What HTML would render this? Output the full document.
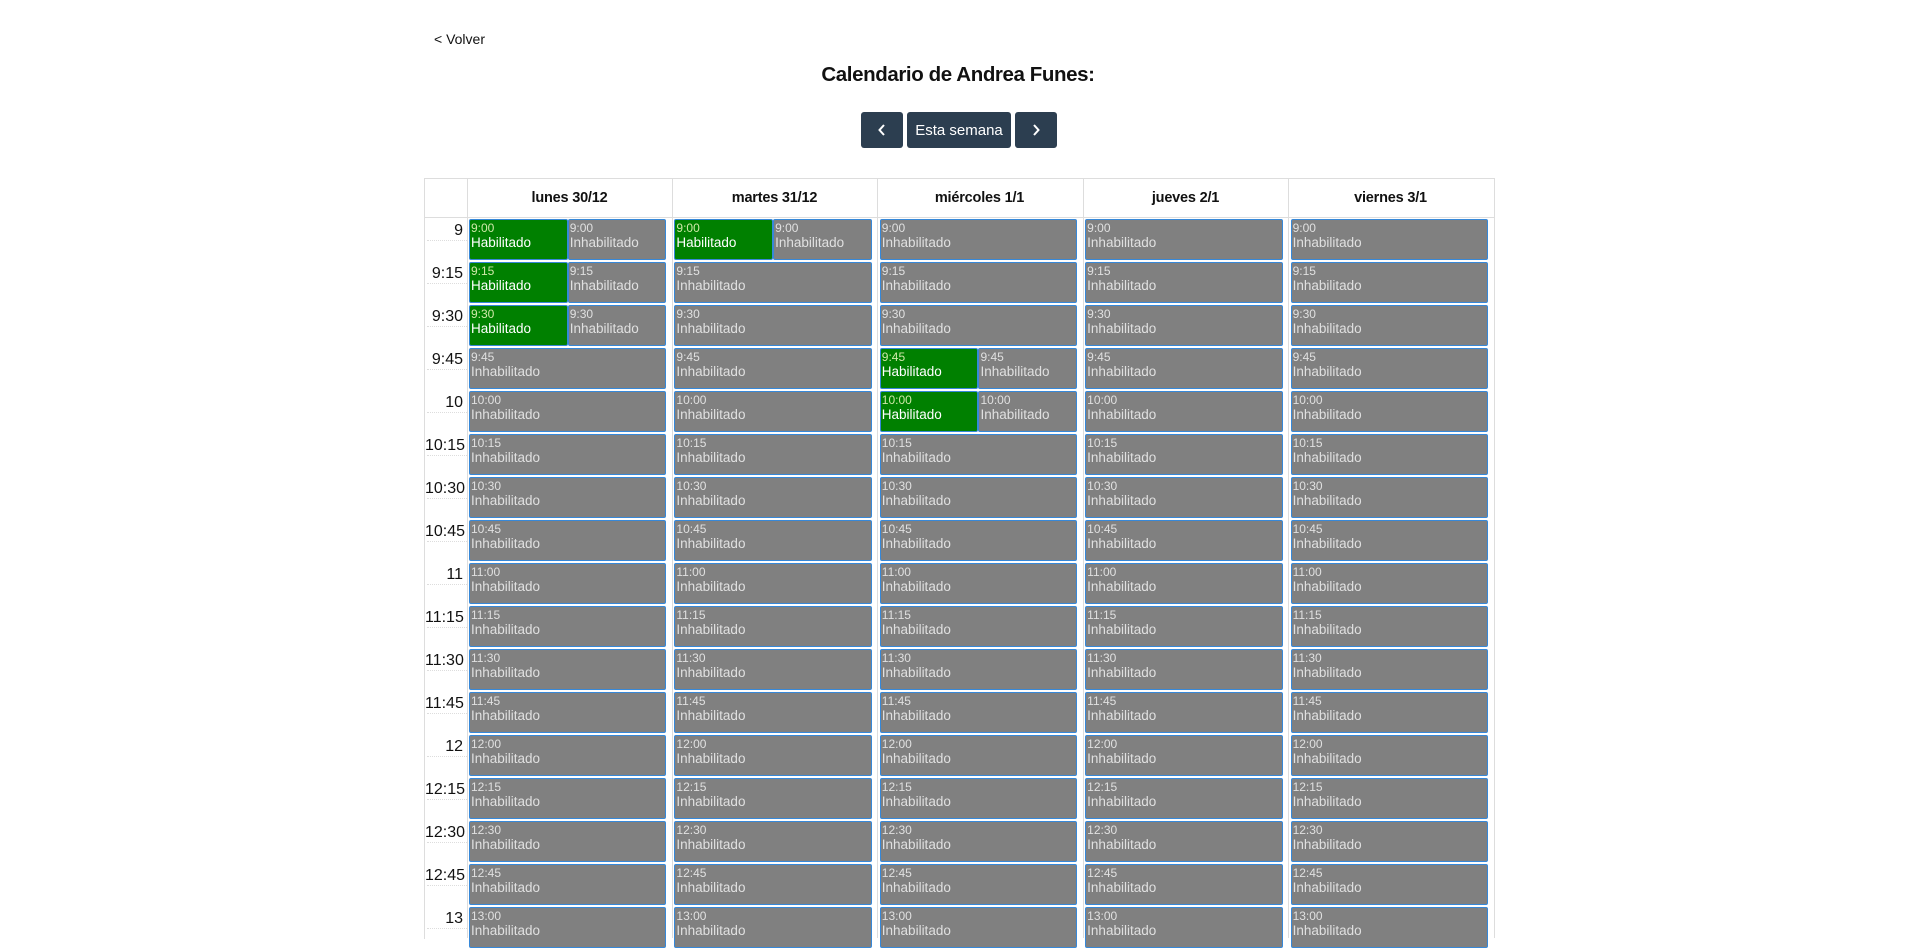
<!DOCTYPE html>
<html><head><meta charset="utf-8"><style>
html,body{margin:0;padding:0;background:#fff;width:1916px;height:928px;overflow:hidden;font-family:"Liberation Sans",Arial,sans-serif;}
.abs{position:absolute;}
#volver{left:434px;top:31px;font-size:14px;color:#111;}
#title{left:0;width:1916px;top:63px;text-align:center;font-size:20.5px;font-weight:bold;color:#111;letter-spacing:-0.4px;}
.btn{top:112px;height:36px;background:#2c3e50;border-radius:3px;color:#fff;display:flex;align-items:center;justify-content:center;font-size:15px;}
#tbl{left:424px;top:178px;width:1070px;height:760px;border-left:1px solid #ddd;border-top:1px solid #ddd;}
.vl{position:absolute;top:178px;width:1px;height:760px;background:#ddd;}
.hd{position:absolute;top:179px;height:39px;width:205px;text-align:center;line-height:39px;font-weight:bold;font-size:14.5px;color:#111;letter-spacing:-0.2px;}
.hl{position:absolute;left:424px;width:1070px;height:1px;background:#ddd;}
.r{position:absolute;left:425px;height:43px;width:1070px;display:flex;}
.t{width:38px;text-align:right;padding-right:4px;font-size:16px;color:#111;padding-top:4px;position:relative;box-sizing:content-box;}
.t:after{content:"";position:absolute;left:2px;right:0;top:22px;border-top:1px dotted #ddd;}
.c{width:205.4px;height:43px;box-sizing:border-box;padding:1px 6px 1px 2px;display:flex;}
.e{flex:1;background:#808080;border:1px solid #3788d8;border-radius:2px;color:#e0e0e0;padding-left:1px;overflow:hidden;white-space:nowrap;height:39px;}
.e.g{background:#008000;color:#fff;}
.e.g .tm{color:#cfe8a8;}
.tm{font-size:12px;line-height:14px;margin-top:1px;}
.lb{font-size:13.5px;line-height:16px;}
</style></head><body>
<div id="volver" class="abs">&lt; Volver</div>
<div id="title" class="abs">Calendario de Andrea Funes:</div>
<div class="abs btn" style="left:861px;width:42px;"><svg width="12" height="16" viewBox="0 0 12 16"><path d="M8 3 L3.5 8 L8 13" stroke="#fff" stroke-width="2" fill="none"/></svg></div>
<div class="abs btn" style="left:907px;width:104px;">Esta semana</div>
<div class="abs btn" style="left:1015px;width:42px;"><svg width="12" height="16" viewBox="0 0 12 16"><path d="M4 3 L8.5 8 L4 13" stroke="#fff" stroke-width="2" fill="none"/></svg></div>
<div id="tbl" class="abs"></div>
<div class="vl" style="left:467px"></div>
<div class="vl" style="left:672px"></div>
<div class="vl" style="left:877px"></div>
<div class="vl" style="left:1083px"></div>
<div class="vl" style="left:1288px"></div>
<div class="vl" style="left:1494px"></div>
<div class="hd" style="left:467px">lunes 30/12</div>
<div class="hd" style="left:672px">martes 31/12</div>
<div class="hd" style="left:877px">miércoles 1/1</div>
<div class="hd" style="left:1083px">jueves 2/1</div>
<div class="hd" style="left:1288px">viernes 3/1</div>
<div class="hl" style="top:217px"></div>

<div class="r" style="top:218px"><div class="t">9</div>
<div class="c"><div class="e g"><div class="tm">9:00</div><div class="lb">Habilitado</div></div><div class="e"><div class="tm">9:00</div><div class="lb">Inhabilitado</div></div></div>
<div class="c"><div class="e g"><div class="tm">9:00</div><div class="lb">Habilitado</div></div><div class="e"><div class="tm">9:00</div><div class="lb">Inhabilitado</div></div></div>
<div class="c"><div class="e"><div class="tm">9:00</div><div class="lb">Inhabilitado</div></div></div>
<div class="c"><div class="e"><div class="tm">9:00</div><div class="lb">Inhabilitado</div></div></div>
<div class="c"><div class="e"><div class="tm">9:00</div><div class="lb">Inhabilitado</div></div></div></div>

<div class="r" style="top:261px"><div class="t">9:15</div>
<div class="c"><div class="e g"><div class="tm">9:15</div><div class="lb">Habilitado</div></div><div class="e"><div class="tm">9:15</div><div class="lb">Inhabilitado</div></div></div>
<div class="c"><div class="e"><div class="tm">9:15</div><div class="lb">Inhabilitado</div></div></div>
<div class="c"><div class="e"><div class="tm">9:15</div><div class="lb">Inhabilitado</div></div></div>
<div class="c"><div class="e"><div class="tm">9:15</div><div class="lb">Inhabilitado</div></div></div>
<div class="c"><div class="e"><div class="tm">9:15</div><div class="lb">Inhabilitado</div></div></div></div>

<div class="r" style="top:304px"><div class="t">9:30</div>
<div class="c"><div class="e g"><div class="tm">9:30</div><div class="lb">Habilitado</div></div><div class="e"><div class="tm">9:30</div><div class="lb">Inhabilitado</div></div></div>
<div class="c"><div class="e"><div class="tm">9:30</div><div class="lb">Inhabilitado</div></div></div>
<div class="c"><div class="e"><div class="tm">9:30</div><div class="lb">Inhabilitado</div></div></div>
<div class="c"><div class="e"><div class="tm">9:30</div><div class="lb">Inhabilitado</div></div></div>
<div class="c"><div class="e"><div class="tm">9:30</div><div class="lb">Inhabilitado</div></div></div></div>

<div class="r" style="top:347px"><div class="t">9:45</div>
<div class="c"><div class="e"><div class="tm">9:45</div><div class="lb">Inhabilitado</div></div></div>
<div class="c"><div class="e"><div class="tm">9:45</div><div class="lb">Inhabilitado</div></div></div>
<div class="c"><div class="e g"><div class="tm">9:45</div><div class="lb">Habilitado</div></div><div class="e"><div class="tm">9:45</div><div class="lb">Inhabilitado</div></div></div>
<div class="c"><div class="e"><div class="tm">9:45</div><div class="lb">Inhabilitado</div></div></div>
<div class="c"><div class="e"><div class="tm">9:45</div><div class="lb">Inhabilitado</div></div></div></div>

<div class="r" style="top:390px"><div class="t">10</div>
<div class="c"><div class="e"><div class="tm">10:00</div><div class="lb">Inhabilitado</div></div></div>
<div class="c"><div class="e"><div class="tm">10:00</div><div class="lb">Inhabilitado</div></div></div>
<div class="c"><div class="e g"><div class="tm">10:00</div><div class="lb">Habilitado</div></div><div class="e"><div class="tm">10:00</div><div class="lb">Inhabilitado</div></div></div>
<div class="c"><div class="e"><div class="tm">10:00</div><div class="lb">Inhabilitado</div></div></div>
<div class="c"><div class="e"><div class="tm">10:00</div><div class="lb">Inhabilitado</div></div></div></div>

<div class="r" style="top:433px"><div class="t">10:15</div>
<div class="c"><div class="e"><div class="tm">10:15</div><div class="lb">Inhabilitado</div></div></div>
<div class="c"><div class="e"><div class="tm">10:15</div><div class="lb">Inhabilitado</div></div></div>
<div class="c"><div class="e"><div class="tm">10:15</div><div class="lb">Inhabilitado</div></div></div>
<div class="c"><div class="e"><div class="tm">10:15</div><div class="lb">Inhabilitado</div></div></div>
<div class="c"><div class="e"><div class="tm">10:15</div><div class="lb">Inhabilitado</div></div></div></div>

<div class="r" style="top:476px"><div class="t">10:30</div>
<div class="c"><div class="e"><div class="tm">10:30</div><div class="lb">Inhabilitado</div></div></div>
<div class="c"><div class="e"><div class="tm">10:30</div><div class="lb">Inhabilitado</div></div></div>
<div class="c"><div class="e"><div class="tm">10:30</div><div class="lb">Inhabilitado</div></div></div>
<div class="c"><div class="e"><div class="tm">10:30</div><div class="lb">Inhabilitado</div></div></div>
<div class="c"><div class="e"><div class="tm">10:30</div><div class="lb">Inhabilitado</div></div></div></div>

<div class="r" style="top:519px"><div class="t">10:45</div>
<div class="c"><div class="e"><div class="tm">10:45</div><div class="lb">Inhabilitado</div></div></div>
<div class="c"><div class="e"><div class="tm">10:45</div><div class="lb">Inhabilitado</div></div></div>
<div class="c"><div class="e"><div class="tm">10:45</div><div class="lb">Inhabilitado</div></div></div>
<div class="c"><div class="e"><div class="tm">10:45</div><div class="lb">Inhabilitado</div></div></div>
<div class="c"><div class="e"><div class="tm">10:45</div><div class="lb">Inhabilitado</div></div></div></div>

<div class="r" style="top:562px"><div class="t">11</div>
<div class="c"><div class="e"><div class="tm">11:00</div><div class="lb">Inhabilitado</div></div></div>
<div class="c"><div class="e"><div class="tm">11:00</div><div class="lb">Inhabilitado</div></div></div>
<div class="c"><div class="e"><div class="tm">11:00</div><div class="lb">Inhabilitado</div></div></div>
<div class="c"><div class="e"><div class="tm">11:00</div><div class="lb">Inhabilitado</div></div></div>
<div class="c"><div class="e"><div class="tm">11:00</div><div class="lb">Inhabilitado</div></div></div></div>

<div class="r" style="top:605px"><div class="t">11:15</div>
<div class="c"><div class="e"><div class="tm">11:15</div><div class="lb">Inhabilitado</div></div></div>
<div class="c"><div class="e"><div class="tm">11:15</div><div class="lb">Inhabilitado</div></div></div>
<div class="c"><div class="e"><div class="tm">11:15</div><div class="lb">Inhabilitado</div></div></div>
<div class="c"><div class="e"><div class="tm">11:15</div><div class="lb">Inhabilitado</div></div></div>
<div class="c"><div class="e"><div class="tm">11:15</div><div class="lb">Inhabilitado</div></div></div></div>

<div class="r" style="top:648px"><div class="t">11:30</div>
<div class="c"><div class="e"><div class="tm">11:30</div><div class="lb">Inhabilitado</div></div></div>
<div class="c"><div class="e"><div class="tm">11:30</div><div class="lb">Inhabilitado</div></div></div>
<div class="c"><div class="e"><div class="tm">11:30</div><div class="lb">Inhabilitado</div></div></div>
<div class="c"><div class="e"><div class="tm">11:30</div><div class="lb">Inhabilitado</div></div></div>
<div class="c"><div class="e"><div class="tm">11:30</div><div class="lb">Inhabilitado</div></div></div></div>

<div class="r" style="top:691px"><div class="t">11:45</div>
<div class="c"><div class="e"><div class="tm">11:45</div><div class="lb">Inhabilitado</div></div></div>
<div class="c"><div class="e"><div class="tm">11:45</div><div class="lb">Inhabilitado</div></div></div>
<div class="c"><div class="e"><div class="tm">11:45</div><div class="lb">Inhabilitado</div></div></div>
<div class="c"><div class="e"><div class="tm">11:45</div><div class="lb">Inhabilitado</div></div></div>
<div class="c"><div class="e"><div class="tm">11:45</div><div class="lb">Inhabilitado</div></div></div></div>

<div class="r" style="top:734px"><div class="t">12</div>
<div class="c"><div class="e"><div class="tm">12:00</div><div class="lb">Inhabilitado</div></div></div>
<div class="c"><div class="e"><div class="tm">12:00</div><div class="lb">Inhabilitado</div></div></div>
<div class="c"><div class="e"><div class="tm">12:00</div><div class="lb">Inhabilitado</div></div></div>
<div class="c"><div class="e"><div class="tm">12:00</div><div class="lb">Inhabilitado</div></div></div>
<div class="c"><div class="e"><div class="tm">12:00</div><div class="lb">Inhabilitado</div></div></div></div>

<div class="r" style="top:777px"><div class="t">12:15</div>
<div class="c"><div class="e"><div class="tm">12:15</div><div class="lb">Inhabilitado</div></div></div>
<div class="c"><div class="e"><div class="tm">12:15</div><div class="lb">Inhabilitado</div></div></div>
<div class="c"><div class="e"><div class="tm">12:15</div><div class="lb">Inhabilitado</div></div></div>
<div class="c"><div class="e"><div class="tm">12:15</div><div class="lb">Inhabilitado</div></div></div>
<div class="c"><div class="e"><div class="tm">12:15</div><div class="lb">Inhabilitado</div></div></div></div>

<div class="r" style="top:820px"><div class="t">12:30</div>
<div class="c"><div class="e"><div class="tm">12:30</div><div class="lb">Inhabilitado</div></div></div>
<div class="c"><div class="e"><div class="tm">12:30</div><div class="lb">Inhabilitado</div></div></div>
<div class="c"><div class="e"><div class="tm">12:30</div><div class="lb">Inhabilitado</div></div></div>
<div class="c"><div class="e"><div class="tm">12:30</div><div class="lb">Inhabilitado</div></div></div>
<div class="c"><div class="e"><div class="tm">12:30</div><div class="lb">Inhabilitado</div></div></div></div>

<div class="r" style="top:863px"><div class="t">12:45</div>
<div class="c"><div class="e"><div class="tm">12:45</div><div class="lb">Inhabilitado</div></div></div>
<div class="c"><div class="e"><div class="tm">12:45</div><div class="lb">Inhabilitado</div></div></div>
<div class="c"><div class="e"><div class="tm">12:45</div><div class="lb">Inhabilitado</div></div></div>
<div class="c"><div class="e"><div class="tm">12:45</div><div class="lb">Inhabilitado</div></div></div>
<div class="c"><div class="e"><div class="tm">12:45</div><div class="lb">Inhabilitado</div></div></div></div>

<div class="r" style="top:906px"><div class="t">13</div>
<div class="c"><div class="e"><div class="tm">13:00</div><div class="lb">Inhabilitado</div></div></div>
<div class="c"><div class="e"><div class="tm">13:00</div><div class="lb">Inhabilitado</div></div></div>
<div class="c"><div class="e"><div class="tm">13:00</div><div class="lb">Inhabilitado</div></div></div>
<div class="c"><div class="e"><div class="tm">13:00</div><div class="lb">Inhabilitado</div></div></div>
<div class="c"><div class="e"><div class="tm">13:00</div><div class="lb">Inhabilitado</div></div></div></div>
</body></html>
